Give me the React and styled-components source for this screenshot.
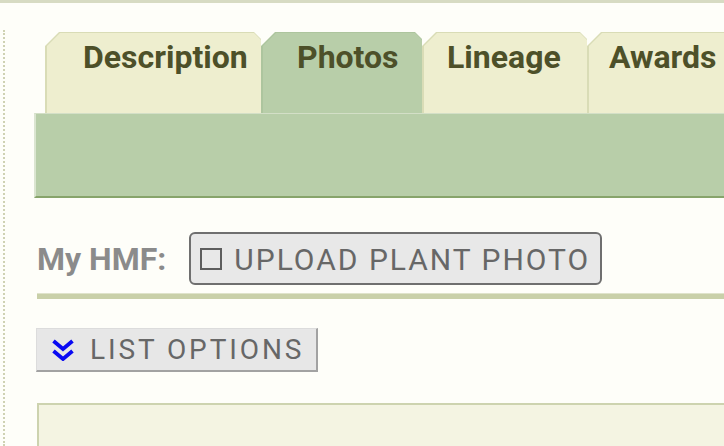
import styled, { createGlobalStyle } from 'styled-components';

const GlobalStyle = createGlobalStyle`
    html, body {
        margin: 0;
        padding: 0;
        background: #fefef9;
        overflow: hidden;
        font-family: Roboto, "Liberation Sans", sans-serif;
    }
    * {
        box-sizing: border-box;
    }
`;

const tabs = [
    { label: 'Description', width: 216, indent: 38 },
    { label: 'Photos', width: 161, indent: 36, active: true },
    { label: 'Lineage', width: 165, indent: 25 },
    { label: 'Awards', width: 160, indent: 22 },
];

const ChevronsDown = () => (
    <svg width="22" height="22" viewBox="0 0 22 22" fill="none" stroke="#0a0af2" strokeWidth="3.8" strokeLinecap="butt" strokeLinejoin="miter">
        <polyline points="1.5,2 11,10 20.5,2" />
        <polyline points="1.5,12 11,20 20.5,12" />
    </svg>
);

const App = () => {
    return (
        <Page>
            <GlobalStyle />
            <Frame>
                <TabBar>
                    {tabs.map((t) => (
                        <Tab key={t.label} $width={t.width} $active={t.active}>
                            <TabFace $active={t.active} $indent={t.indent}>
                                {t.label}
                            </TabFace>
                        </Tab>
                    ))}
                </TabBar>
                <TabPanel />
                <Content>
                    <HmfRow>
                        <HmfLabel>My HMF:</HmfLabel>
                        <UploadButton type="button">
                            <Box />
                            UPLOAD PLANT PHOTO
                        </UploadButton>
                    </HmfRow>
                    <Separator />
                    <ListButton type="button">
                        <ChevronsDown />
                        <span>LIST OPTIONS</span>
                    </ListButton>
                    <ListPanel />
                </Content>
            </Frame>
        </Page>
    );
};

export default App;

const Page = styled.div`
    height: 100vh;
    border-top: 3px solid #d7dbc3;
`;

const Frame = styled.div`
    height: calc(100% - 27px);
    margin: 27px 0 0 3px;
    padding-left: 29px;
    border-left: 2px dotted #cfd2b3;
`;

const TabBar = styled.div`
    display: flex;
    align-items: flex-end;
    height: 83px;
    padding-top: 2px;
    margin-left: 11px;
`;

const Tab = styled.div`
    flex-shrink: 0;
    width: ${(p) => p.$width}px;
    height: 81px;
    padding: 1px 0 0 2px;
    background: ${(p) => (p.$active ? '#adc59e' : '#d9dcb6')};
    clip-path: polygon(0 14px, 14px 0, calc(100% - 7px) 0, 100% 7px, 100% 100%, 0 100%);
`;

const TabFace = styled.div`
    height: 100%;
    padding: 8px 0 0 ${(p) => p.$indent - 2}px;
    background: ${(p) => (p.$active ? '#b8cea9' : '#eeeecf')};
    clip-path: polygon(0 13px, 13px 0, calc(100% - 7px) 0, 100% 7px, 100% 100%, 0 100%);
    color: #4d5029;
    font-size: 32px;
    line-height: 32px;
    font-weight: 700;
    white-space: nowrap;
`;

const TabPanel = styled.div`
    height: 85px;
    background: #b8cea9;
    border-top: 1px solid #d3dfc7;
    border-left: 2px solid #dbe5d1;
    border-bottom: 2px solid #87a46b;
`;

const Content = styled.div`
    padding-left: 3px;
`;

const HmfRow = styled.div`
    display: flex;
    align-items: center;
    gap: 23px;
    margin-top: 34px;
`;

const HmfLabel = styled.div`
    color: #8b8b8b;
    font-size: 32px;
    line-height: 32px;
    font-weight: 700;
`;

const UploadButton = styled.button`
    display: inline-flex;
    align-items: center;
    gap: 12px;
    height: 53px;
    padding: 2px 10px 0 9px;
    background: #e8e8e8;
    border: 2px solid #6f6f6f;
    border-radius: 6px;
    color: #676767;
    font-family: Roboto, "Liberation Sans", sans-serif;
    font-size: 30px;
    line-height: 30px;
    letter-spacing: 2px;
`;

const Box = styled.span`
    display: inline-block;
    width: 22px;
    height: 22px;
    margin-top: -2px;
    border: 2px solid #5d5d5d;
`;

const Separator = styled.div`
    margin-top: 8px;
    height: 6px;
    background: #c9d0a9;
    border-top: 1px solid #dfe3cb;
`;

const ListButton = styled.button`
    display: flex;
    align-items: center;
    gap: 16px;
    width: 282px;
    height: 44px;
    margin: 29px 0 0 -1px;
    padding: 0 0 0 15px;
    background: #e7e7e7;
    border-style: solid;
    border-width: 1px 2px 2px 1px;
    border-color: #dcdcdc #a2a2a2 #a2a2a2 #dcdcdc;
    color: #676767;
    font-family: Roboto, "Liberation Sans", sans-serif;
    font-size: 28px;
    line-height: 28px;
    letter-spacing: 2.9px;
`;

const ListPanel = styled.div`
    margin-top: 31px;
    height: 43px;
    background: #f4f4e2;
    border-top: 2px solid #cdd3af;
    border-left: 2px solid #cdd3af;
`;
